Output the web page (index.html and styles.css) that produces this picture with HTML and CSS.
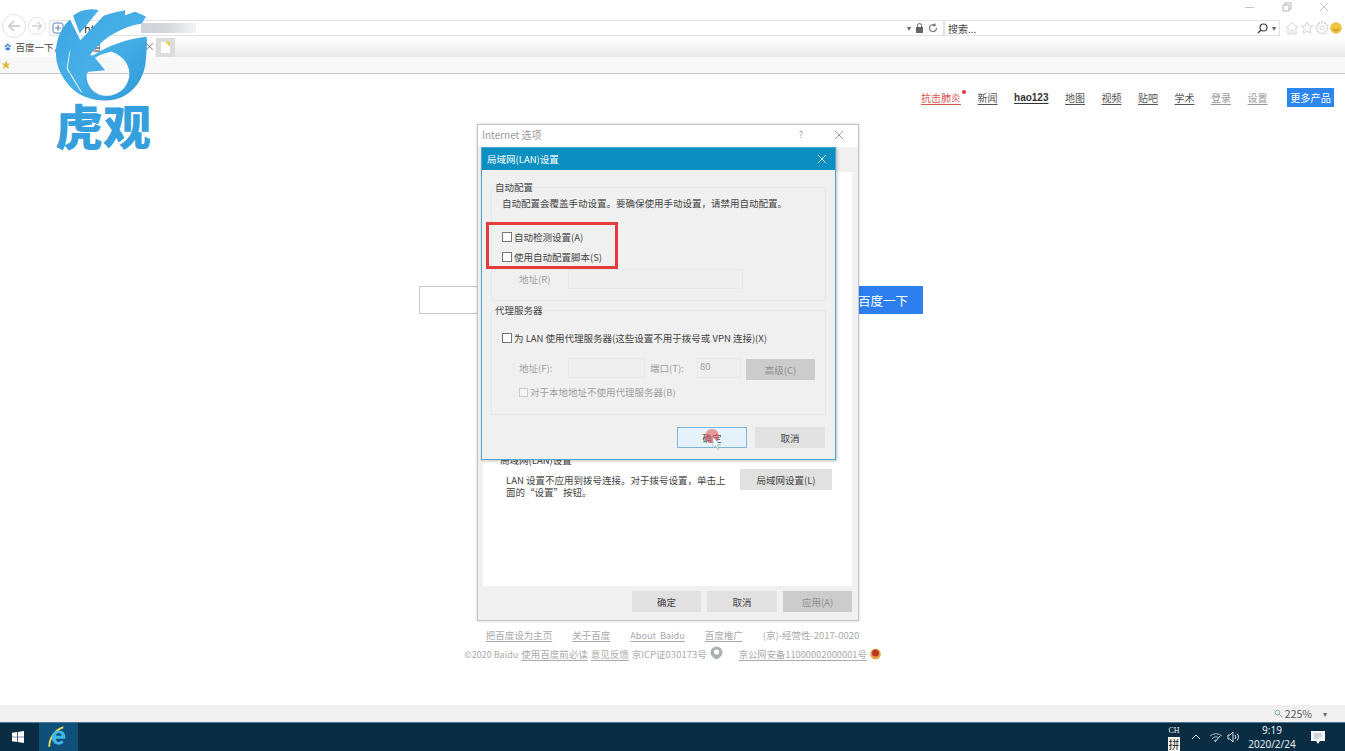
FILE: index.html
```html
<!DOCTYPE html>
<html lang="zh">
<head>
<meta charset="utf-8">
<title>百度一下</title>
<link rel="stylesheet" href="styles.css">
</head>
<body>
<div class="screen">
  <header class="chrome">
    <div class="winbar">
      <svg class="wc" width="12" height="12" viewBox="0 0 12 12"><path d="M1 6.500h9" stroke="#c4c4c4" fill="none"/></svg>
      <svg class="wc" width="12" height="12" viewBox="0 0 12 12"><path d="M2 4h6v6H2zM4 4V2h6v6H8" stroke="#b5b5b5" fill="none"/></svg>
      <svg class="wc" width="12" height="12" viewBox="0 0 12 12"><path d="M2 2l8 8M10 2l-8 8" stroke="#c4c4c4" fill="none"/></svg>
    </div>
    <div class="addrrow">
      <svg class="back" width="24" height="24" viewBox="0 0 24 24"><circle cx="12" cy="12" r="11.500" fill="#fff" stroke="#e2e2e2"/><path d="M18 12H7M12 7l-5 5 5 5" fill="none" stroke="#d2d2d2" stroke-width="2"/></svg>
      <svg class="fwd" width="18" height="18" viewBox="0 0 18 18"><circle cx="9" cy="9" r="8.500" fill="#fff" stroke="#e2e2e2"/><path d="M4 9h9M9.500 5l4 4-4 4" fill="none" stroke="#d2d2d2" stroke-width="1.500"/></svg>
      <div class="addr">
        <svg width="12" height="12" viewBox="0 0 12 12"><rect x="1" y="1" width="10" height="10" rx="2" fill="#fff" stroke="#5a84b4"/><path d="M3 6h6M6 3v6" stroke="#5a84b4"/></svg>
        <span class="addr-text">http</span>
        <span class="smudge"></span>
        <span class="addr-tools">
          <span class="caret">▾</span>
          <svg width="9" height="10" viewBox="0 0 9 10"><rect x="1" y="4" width="7" height="6" fill="#666"/><path d="M2.500 4V2.500a2 2 0 0 1 4 0V4" fill="none" stroke="#666"/></svg>
          <svg width="10" height="10" viewBox="0 0 10 10"><path d="M8.500 5A3.500 3.500 0 1 1 7 2.200M7 .5v2.200H4.800" fill="none" stroke="#777" stroke-width="1.200"/></svg>
        </span>
      </div>
      <div class="search">
        <span class="search-text">搜索...</span>
        <svg width="11" height="11" viewBox="0 0 11 11"><circle cx="6.500" cy="4.500" r="3.500" fill="none" stroke="#444" stroke-width="1.200"/><path d="M4 7l-3 3" stroke="#444" stroke-width="1.400"/></svg>
        <span class="caret">▾</span>
      </div>
      <div class="tools">
        <svg width="14" height="14" viewBox="0 0 14 14"><path d="M1 7l6-5.500L13 7M3 6v7h3V9h2v4h3V6" fill="none" stroke="#d4d4d4"/></svg>
        <svg width="14" height="14" viewBox="0 0 14 14"><path d="M7 1l1.800 4h4.200l-3.300 2.800 1.200 4.500L7 9.900l-3.900 2.400 1.200-4.500L1 5h4.200z" fill="none" stroke="#d4d4d4"/></svg>
        <svg width="14" height="14" viewBox="0 0 14 14"><circle cx="7" cy="7" r="5.500" fill="none" stroke="#d4d4d4" stroke-width="1.600" stroke-dasharray="2.200 .8"/><circle cx="7" cy="7" r="2" fill="none" stroke="#d4d4d4"/></svg>
        <svg width="12" height="12" viewBox="0 0 12 12"><circle cx="6" cy="6" r="5.800" fill="#f0c33c"/><path d="M3.200 7.200c1.500 1.800 4 1.800 5.600 0" fill="none" stroke="#a67b14"/></svg>
      </div>
    </div>
    <div class="tabrow">
      <div class="tab">
        <svg width="8" height="8" viewBox="0 0 8 8"><circle cx="2" cy="3" r="1.200" fill="#3a7fd5"/><circle cx="6" cy="3" r="1.200" fill="#3a7fd5"/><circle cx="4" cy="1.500" r="1.200" fill="#3a7fd5"/><ellipse cx="4" cy="6" rx="2.500" ry="1.800" fill="#3a7fd5"/></svg>
        <span class="tab-title">百度一下，你就知道</span>
        <span class="tab-x">×</span>
      </div>
      <div class="newtab"><span class="doc"></span></div>
    </div>
    <div class="favrow">
      <svg width="10" height="10" viewBox="0 0 10 10"><path d="M5 .5l1.300 3h3.200L7 5.600l1 3.400-3-1.900L2 9l1-3.400L.5 3.500h3.200z" fill="#e3bb3f"/></svg>
    </div>
  </header>

  <main class="page">
    <nav class="topnav">
      <a class="red">抗击肺炎<i class="dot"></i></a>
      <a>新闻</a>
      <a class="bold">hao123</a>
      <a>地图</a>
      <a>视频</a>
      <a>贴吧</a>
      <a>学术</a>
      <a class="pale">登录</a>
      <a class="pale">设置</a>
      <span class="more">更多产品</span>
    </nav>
    <div class="searchform">
      <div class="kw"></div>
      <div class="su">百度一下</div>
    </div>
    <div class="foot foot1">
      <a>把百度设为主页</a>
      <a>关于百度</a>
      <a class="about">About&nbsp; Baidu</a>
      <a>百度推广</a>
      <span>(京)-经营性-2017-0020</span>
    </div>
    <div class="foot foot2">
      <span class="copy">©2020 Baidu</span>
      <a>使用百度前必读</a>
      <a>意见反馈</a>
      <span>京ICP证030173号</span>
      <svg class="badge" width="13" height="14" viewBox="0 0 13 14"><path d="M6.500 .5a6 6 0 0 1 6 6c0 3-3 5.500-6 7-3-1.500-6-4-6-7a6 6 0 0 1 6-6z" fill="#a9b1b1"/><circle cx="6.500" cy="6" r="2.600" fill="#fff"/></svg>
      <a class="police">京公网安备11000002000001号</a>
      <svg class="badge2" width="11" height="12" viewBox="0 0 11 12"><circle cx="5.500" cy="6" r="5.300" fill="#e6a23c"/><circle cx="5.500" cy="5" r="3.500" fill="#b8352c"/></svg>
    </div>
  </main>

  <div class="statusbar">
    <svg width="9" height="9" viewBox="0 0 9 9"><circle cx="3.500" cy="3.500" r="2.300" fill="none" stroke="#8aa"/><path d="M5.500 5.500L8.500 8.500" stroke="#999"/></svg>
    <span class="zoomv">225%</span>
    <span class="caret">▾</span>
  </div>

  <footer class="taskbar">
    <svg class="start" width="12" height="12" viewBox="0 0 13 13"><path d="M0 2l5.700-.9v5H0zM6.500 1L13 0v6.100H6.500zM0 6.900h5.700v5L0 11zM6.500 6.900H13V13l-6.500-1z" fill="#fff"/></svg>
    <div class="ie">
      <svg width="22" height="24" viewBox="0 0 20 22"><path d="M1 20C1 12 7 4 14 2" fill="none" stroke="#e8d65a" stroke-width="1.800"/><path d="M14.500 15.500c-1 1.500-2.700 2.500-4.800 2.500-3.700 0-6-2.700-6-6.300 0-3.900 2.600-6.700 6.300-6.700 3.600 0 5.800 2.500 5.800 6.200v1.300H7.200c.2 1.900 1.200 3 2.700 3 1 0 1.700-.5 2.100-1.300zM7.300 9.800h5c-.1-1.500-1-2.500-2.400-2.500-1.400 0-2.400 1-2.600 2.500z" fill="#3fb6ee"/></svg>
    </div>
    <div class="tray">
      <div class="ime"><span class="ch">CH</span><span class="pin">拼</span></div>
      <svg width="10" height="6" viewBox="0 0 10 6"><path d="M1 5l4-4 4 4" fill="none" stroke="#dde6ec"/></svg>
      <svg class="net" width="14" height="12" viewBox="0 0 14 12"><path d="M1 5a9 9 0 0 1 12 0M3 7.500a6 6 0 0 1 6-1.500M5 10a3 3 0 0 1 2-1" fill="none" stroke="#a9bbc7"/><path d="M6 11l5-6" stroke="#dde6ec"/></svg>
      <svg class="vol" width="14" height="12" viewBox="0 0 14 12"><path d="M1 4h2l3-3v10L3 8H1z" fill="none" stroke="#dde6ec"/><path d="M8 4a3 3 0 0 1 0 4M10 2.500a5 5 0 0 1 0 7" fill="none" stroke="#dde6ec"/></svg>
      <div class="clock"><span>9:19</span><span>2020/2/24</span></div>
      <svg class="notif" width="14" height="13" viewBox="0 0 14 13"><path d="M0 0h14v10H9l-2 3-2-3H0z" fill="#f3f6f8"/><path d="M3 3h8M3 5h8M3 7h5" stroke="#8b9aa5" stroke-width=".7"/></svg>
    </div>
  </footer>

  <section class="inetopt">
    <div class="inet-title">
      <span class="inet-name">Internet 选项</span>
      <span class="inet-help">?</span>
      <svg width="10" height="10" viewBox="0 0 10 10"><path d="M1 1l8 8M9 1l-8 8" stroke="#a0a0a0" fill="none"/></svg>
    </div>
    <div class="inet-body">
      <div class="panel">
        <div class="lan-head">局域网(LAN)设置</div>
        <div class="lan-row">
          <p class="lan-text">LAN 设置不应用到拨号连接。对于拨号设置，单击上面的“设置”按钮。</p>
          <span class="btn lanbtn">局域网设置(L)</span>
        </div>
      </div>
      <div class="inet-actions">
        <span class="btn w69">确定</span>
        <span class="btn w70">取消</span>
        <span class="btn w69 off">应用(A)</span>
      </div>
    </div>
  </section>

  <section class="landlg">
    <div class="lan-title">
      <span>局域网(LAN)设置</span>
      <svg width="10" height="10" viewBox="0 0 10 10"><path d="M1 1l8 8M9 1l-8 8" stroke="#d8eef6" fill="none"/></svg>
    </div>
    <div class="lan-body">
      <fieldset class="group g1">
        <legend>自动配置</legend>
        <p class="note">自动配置会覆盖手动设置。要确保使用手动设置，请禁用自动配置。</p>
        <div class="opts">
          <label class="opt"><i class="cb"></i>自动检测设置(A)</label>
          <label class="opt"><i class="cb"></i>使用自动配置脚本(S)</label>
        </div>
        <div class="fieldrow r-addr">
          <span class="dim lbl">地址(R)</span>
          <span class="inp w175"></span>
        </div>
      </fieldset>
      <fieldset class="group g2">
        <legend>代理服务器</legend>
        <label class="opt proxy"><i class="cb"></i>为 LAN 使用代理服务器(这些设置不用于拨号或 VPN 连接)(X)</label>
        <div class="fieldrow r-proxy">
          <span class="dim lbl">地址(F):</span>
          <span class="inp w77"></span>
          <span class="dim lbl2">端口(T):</span>
          <span class="inp w43 dim">80</span>
          <span class="btn adv off">高级(C)</span>
        </div>
        <label class="opt local dim"><i class="cb cb-off"></i>对于本地地址不使用代理服务器(B)</label>
      </fieldset>
      <div class="lan-actions">
        <span class="btn ok">确定</span>
        <span class="btn w70">取消</span>
      </div>
    </div>
    <div class="redbox"></div>
  </section>

  <div class="cursor">
    <svg width="22" height="24" viewBox="0 0 22 24"><circle cx="8" cy="8" r="7" fill="#ea5c5c" fill-opacity=".6"/><path d="M9 9v11l2.500-2.500 2 4 1.500-.8-2-3.700h3.300z" fill="#fff" stroke="#8aa" stroke-width=".6"/></svg>
  </div>

  <div class="logo">
    <svg class="logo-mark" width="130" height="107" viewBox="0 0 390 320">
      <defs>
        <linearGradient id="lg" x1="0" y1="0" x2="1" y2="1"><stop offset="0" stop-color="#3aa3e0"/><stop offset=".5" stop-color="#48b0e8"/><stop offset="1" stop-color="#2f97d6"/></linearGradient>
      </defs>
      <path d="M99 47C122 29 150 24 176 30L119 100z" fill="url(#lg)"/>
      <path fill="url(#lg)" fill-rule="evenodd" d="M90 58L121 120L192 46C215 38 240 33 255 30L255 45L285 35L305 43L318 50L305 70L280 75C230 90 180 120 150 165L160 165C200 140 260 115 320 110C322 135 320 150 318 175C314 250 262 301 198 301C175 301 150 297 125 285C85 265 50 215 48 165C46 125 60 85 90 58Z M165 173C185 162 200 157 215 155C245 165 268 190 268 220C268 258 238 287 200 287C165 287 140 258 140 228C140 222 142 218 145 215L195 210Z M89 150L91 151L83 205L126 276L123 276L80 206Z"/>
    </svg>
    <div class="logo-text">虎观</div>
  </div>
</div>
</body>
</html>
```

FILE: styles.css
```css
* { box-sizing: border-box; }
html, body { margin: 0; padding: 0; }
body { font-family: "Noto Sans CJK SC", "Noto Sans", sans-serif; color: #444; background: #fff; }
a { color: inherit; }
p { margin: 0; }

.screen { position: relative; width: 1345px; height: 751px; overflow: hidden; display: flex; flex-direction: column; background: #fff; }

/* browser chrome */
.chrome { height: 74px; flex: none; display: flex; flex-direction: column; border-bottom: 1px solid #c9c9c9; }
.winbar { height: 14px; display: flex; justify-content: flex-end; gap: 25px; padding-right: 15px; padding-top: 1px; }
.addrrow { height: 24px; display: flex; align-items: flex-start; }
.back { margin-left: 2px; flex: none; }
.fwd { margin-left: 2px; margin-top: 3px; flex: none; }
.addr { margin-left: 3px; margin-top: 6px; width: 895px; height: 16px; border: 1px solid #e3e3e3; display: flex; align-items: center; padding-left: 2px; font-size: 10px; flex: none; }
.addr-text { margin-left: 20px; color: #333; font-size: 11px; }
.smudge { margin-left: 35px; width: 55px; height: 10px; background: linear-gradient(90deg, #cfd3d8 0, #d5d8dc 50%, #f4f4f4 100%); }
.addr-tools { margin-left: auto; display: flex; align-items: center; gap: 4px; padding-right: 5px; }
.caret { font-size: 8px; color: #666; line-height: 1; }
.search { margin-top: 6px; width: 336px; height: 16px; border: 1px solid #e3e3e3; display: flex; align-items: center; padding: 0 3px; gap: 4px; flex: none; }
.search-text { font-size: 10px; color: #444; margin-right: auto; }
.tools { margin-left: 5px; margin-top: 7px; display: flex; align-items: center; gap: 1px; flex: none; }

.tabrow { height: 19px; display: flex; align-items: stretch; background: linear-gradient(#fff, #e9e9e9); }
.tab { width: 155px; background: #fff; display: flex; align-items: center; padding: 0 0 2px 4px; gap: 4px; font-size: 9.500px; color: #444; }
.tab-title { width: 134px; overflow: hidden; white-space: nowrap; }
.tab-x { color: #777; font-size: 11px; line-height: 1; }
.newtab { width: 19px; margin-left: 1px; background: #dcdcdc; display: flex; align-items: center; justify-content: center; }
.doc { width: 9px; height: 11px; background: linear-gradient(225deg, #f2c83a 0 3px, #fff 3px); }
.favrow { height: 16px; flex: 1; background: #f8f8f8; display: flex; align-items: center; padding-left: 1px; }

/* page */
.page { flex: 1; min-height: 0; display: flex; flex-direction: column; }
.topnav { margin-top: 14px; height: 19px; display: flex; align-items: center; justify-content: flex-end; padding-right: 11px; gap: 16.500px; font-size: 10px; color: #555; }
.topnav a { text-decoration: underline; text-underline-offset: 2px; position: relative; white-space: nowrap; }
.topnav .red { color: #d9534f; }
.topnav .bold { font-family: "Liberation Sans", sans-serif; font-weight: 700; font-size: 10px; color: #333; }
.topnav .pale { color: #999; }
.dot { position: absolute; right: -5px; top: 0; width: 4px; height: 4px; border-radius: 50%; background: #e33; }
.more { width: 47px; height: 19px; margin-left: 3px; background: #2d86f0; color: #fff; font-size: 10.200px; display: flex; align-items: center; justify-content: center; }

.searchform { margin-top: 179px; margin-left: 419px; width: 504px; height: 28px; display: flex; }
.kw { flex: 1; border: 1px solid #c8c8c8; }
.su { width: 80px; background: #2d7ff0; color: #fff; font-size: 12.500px; display: flex; align-items: center; justify-content: center; }

.foot { display: flex; justify-content: center; align-items: center; color: #aaa; font-size: 9.500px; height: 14px; white-space: nowrap; }
.foot a { text-decoration: underline; text-underline-offset: 2px; }
.foot1 { margin-top: 314px; gap: 20px; }
.about { font-size: 9.100px; }
.foot2 { margin-top: 5px; gap: 3px; }
.copy { font-size: 9px; }
.badge { margin-top: -3px; }
.police { margin-left: 13px; font-size: 9.300px; }
.badge2 { margin-top: -1px; }

.statusbar { height: 17px; flex: none; background: #f0f0f0; display: flex; align-items: center; justify-content: flex-end; font-size: 10.500px; color: #555; padding-right: 18px; }
.zoomv { margin-left: 2px; margin-right: 11px; }

.taskbar { height: 29px; flex: none; background: #0b2d44; border-top: 1px solid #4e7a97; display: flex; align-items: center; color: #e6edf2; }
.start { margin-left: 12px; flex: none; }
.ie { width: 39px; height: 28px; margin-left: 15px; background: #0e5079; display: flex; align-items: center; justify-content: center; flex: none; }
.tray { margin-left: auto; display: flex; align-items: center; height: 28px; padding-right: 20px; }
.ime { width: 14px; display: flex; flex-direction: column; align-items: center; margin-right: 10px; }
.ch { font-size: 8px; line-height: 13px; font-family: "Liberation Serif", serif; }
.pin { width: 12px; height: 14px; background: #f3f3f3; color: #222; font-size: 11px; line-height: 14px; text-align: center; }
.net { margin-left: 8px; }
.vol { margin-left: 4px; }
.clock { width: 56px; margin-left: 3px; display: flex; flex-direction: column; align-items: center; font-size: 10px; line-height: 14px; font-family: "Noto Sans", sans-serif; }
.notif { margin-left: 11px; }

/* windows */
.btn { display: flex; align-items: center; justify-content: center; background: #e1e1e1; color: #444; font-size: 9.500px; height: 21px; }
.btn.off { background: #ccc; color: #8f8f8f; }
.w69 { width: 69px; }
.w70 { width: 70px; }

.inetopt { position: absolute; left: 477px; top: 124px; width: 382px; height: 497px; background: #f0f0f0; border: 1px solid #c4c4c4; box-shadow: 0 0 3px rgba(0,0,0,.2); display: flex; flex-direction: column; }
.inet-title { height: 22px; background: #fff; display: flex; align-items: center; padding: 0 14px 3px 4px; flex: none; color: #999; }
.inet-name { font-size: 10px; margin-right: auto; }
.inet-help { font-size: 9px; margin-right: 31px; }
.inet-body { flex: 1; display: flex; flex-direction: column; padding: 25px 6px 7px 5px; }
.panel { height: 414px; background: #fff; padding-top: 283px; flex: none; }
.lan-head { font-size: 9.500px; line-height: 11px; padding-left: 17px; color: #444; }
.lan-row { display: flex; align-items: flex-start; padding-left: 23px; padding-right: 20px; margin-top: 3px; gap: 13px; }
.lan-text { width: 221px; font-size: 9.500px; line-height: 12px; margin-top: 5px; }
.lanbtn { width: 92px; flex: none; }
.inet-actions { display: flex; justify-content: flex-end; gap: 6px; margin-top: 5px; }

.landlg { position: absolute; left: 481px; top: 147px; width: 355px; height: 313px; background: #f0f0f0; border: 1px solid #52a5cc; box-shadow: 1px 1px 3px rgba(0,0,0,.25); }
.lan-title { height: 22px; background: #0b8fc0; color: #fff; font-size: 9.500px; display: flex; align-items: center; justify-content: space-between; padding: 0 8px 0 5px; }
.lan-body { padding: 10px 9px 0; font-size: 9.500px; }
.group { margin: 0; padding: 0 0 0 10px; border: 1px solid #e7e7e7; min-width: 0; }
.group legend { padding: 0; margin-left: -7px; font-size: 9.500px; line-height: 14px; }
.g1 { height: 121px; }
.g2 { height: 112px; margin-top: 2px; }
.note { line-height: 14px; margin-top: 2px; }
.opts { margin-top: 17px; }
.opt { display: flex; align-items: center; height: 20px; white-space: nowrap; }
.cb { width: 10px; height: 10px; border: 1px solid #777; background: #fff; margin-right: 2px; flex: none; }
.cb-off { width: 9px; height: 9px; border-color: #ccc; background: #f4f4f4; }
.dim { color: #a0a0a0; }
.fieldrow { display: flex; align-items: flex-start; }
.r-addr { margin-top: 2px; padding-left: 17px; height: 21px; line-height: 20px; }
.lbl { width: 49px; line-height: 20px; }
.inp { height: 20px; border: 1px solid #e8e8e8; background: #efefef; display: block; flex: none; padding-left: 2px; line-height: 14px; }
.w175 { width: 175px; }
.w77 { width: 77px; }
.w43 { width: 44px; }
.lbl2 { width: 47px; margin-left: 5px; line-height: 20px; }
.proxy { margin-top: 11px; }
.r-proxy { margin-top: 10px; padding-left: 17px; height: 21px; }
.adv { width: 69px; margin: 1px 0 0 5px; flex: none; }
.local { margin-top: 6px; padding-left: 17px; height: 14px; }
.lan-actions { display: flex; justify-content: flex-end; gap: 8px; margin-top: 12px; padding-right: 1px; }
.ok { width: 70px; background: #e5f1fb; border: 1px solid #7db4dc; }
.redbox { position: absolute; left: 4px; top: 74px; width: 132px; height: 47px; border: 3px solid #e23c3c; }

.cursor { position: absolute; left: 704px; top: 428px; line-height: 0; }

.logo { position: absolute; left: 40px; top: 0; width: 130px; }
.logo-mark { display: block; }
.logo-text { margin-top: -7px; margin-left: 15px; width: 100px; font-size: 48px; line-height: 48px; font-weight: 900; color: #35a0dd; white-space: nowrap; }
```
